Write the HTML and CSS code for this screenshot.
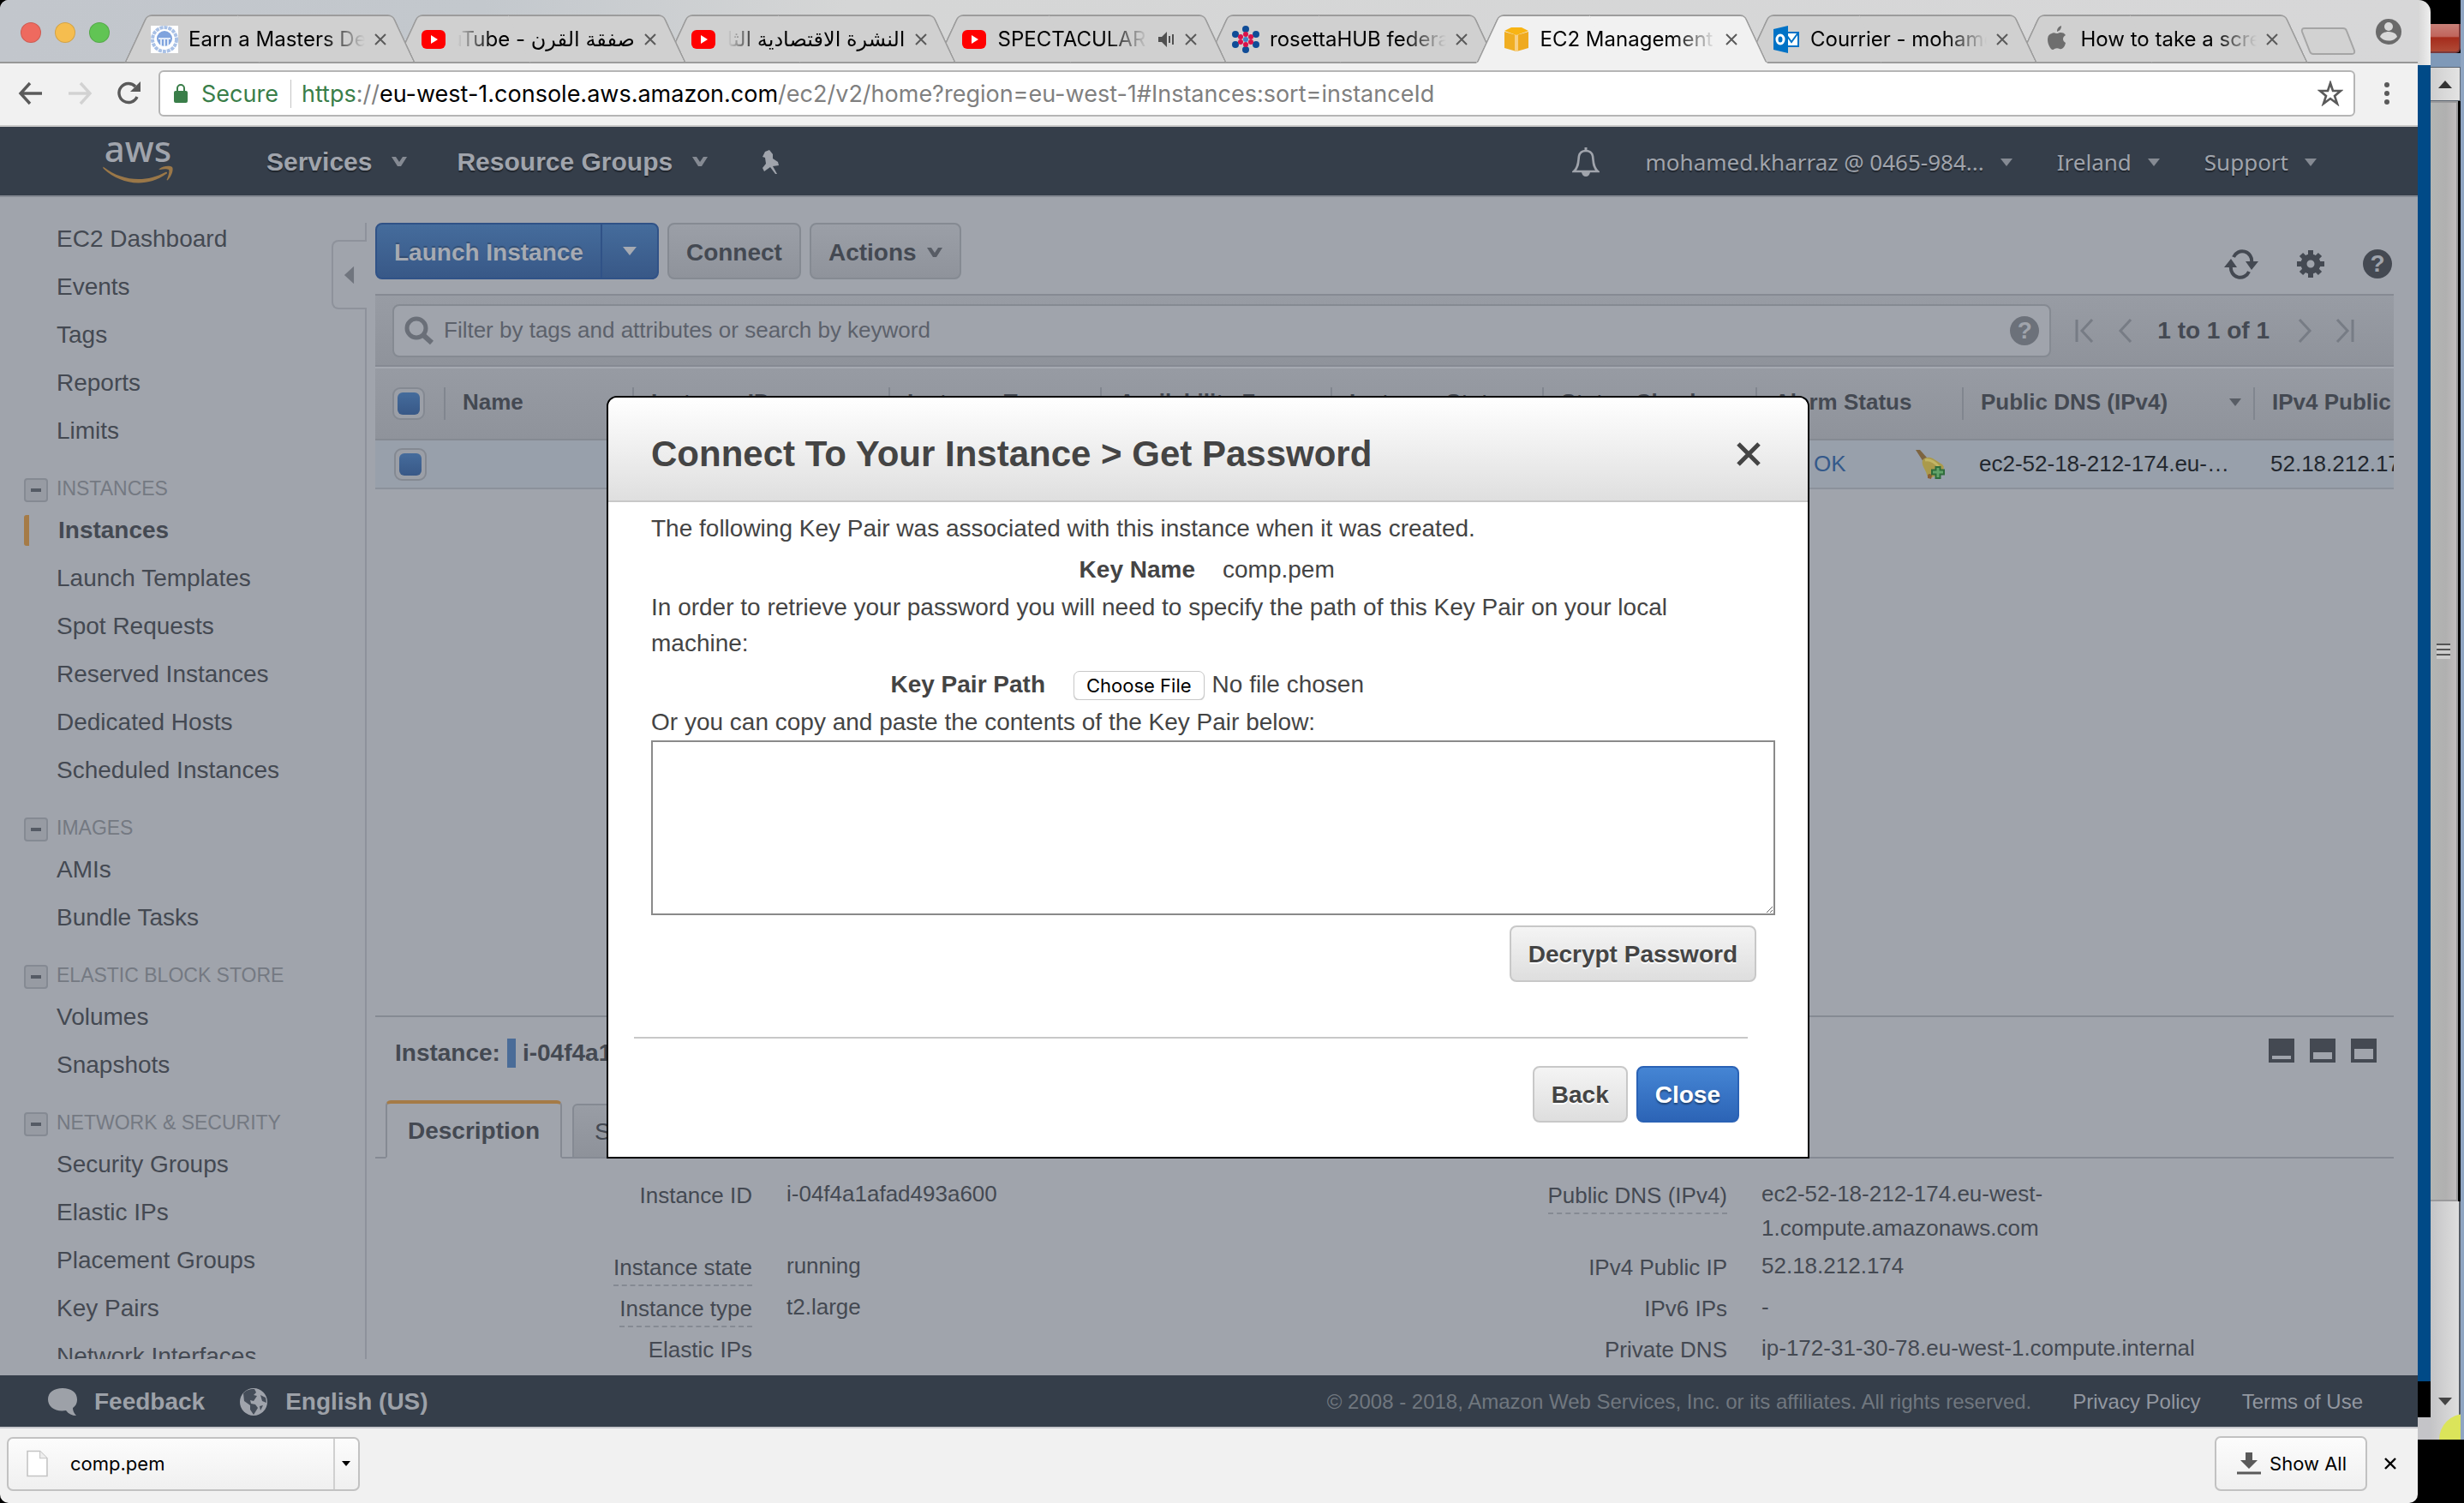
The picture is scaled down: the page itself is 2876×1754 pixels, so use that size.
FILE: index.html
```html
<!DOCTYPE html>
<html lang="en">
<head>
<meta charset="utf-8">
<title>EC2 Management Console</title>
<link rel="stylesheet" href="styles.css">
</head>
<body>
<div class="desktop">
<div class="window">

  <header class="tabstrip">
    <div class="lights"><i class="light red"></i><i class="light amber"></i><i class="light green"></i></div>
    <div class="tabs">
      <div class="tab"><svg class="fav" viewBox="0 0 32 32"><rect width="32" height="32" fill="#fff"/><circle cx="16" cy="16" r="14" fill="none" stroke="#a9c1e6" stroke-width="4" stroke-dasharray="4 1"/><circle cx="16" cy="15" r="9" fill="#7fa3dd"/><path d="M9 15h14M12 15v8M16 15v9M20 15v8" stroke="#dfe9f8" stroke-width="2"/></svg><span class="tab-title">Earn a Masters De</span><button class="x" aria-label="Close tab"><svg viewBox="0 0 16 16"><path d="M2 2l12 12M14 2L2 14"/></svg></button></div>
      <div class="tab"><svg class="fav yt" viewBox="0 0 28 28"><rect y="3" width="28" height="22" rx="6" fill="#f00"/><path d="M11 9l8 5-8 5z" fill="#fff"/></svg><span class="tab-title rtl" dir="rtl">صفقة القرن - YouTube</span><button class="x" aria-label="Close tab"><svg viewBox="0 0 16 16"><path d="M2 2l12 12M14 2L2 14"/></svg></button></div>
      <div class="tab"><svg class="fav yt" viewBox="0 0 28 28"><rect y="3" width="28" height="22" rx="6" fill="#f00"/><path d="M11 9l8 5-8 5z" fill="#fff"/></svg><span class="tab-title rtl" dir="rtl">النشرة الاقتصادية الثان</span><button class="x" aria-label="Close tab"><svg viewBox="0 0 16 16"><path d="M2 2l12 12M14 2L2 14"/></svg></button></div>
      <div class="tab"><svg class="fav yt" viewBox="0 0 28 28"><rect y="3" width="28" height="22" rx="6" fill="#f00"/><path d="M11 9l8 5-8 5z" fill="#fff"/></svg><span class="tab-title">SPECTACULAR</span><svg class="sound" viewBox="0 0 20 18"><path d="M0 6h4l6-6v18l-6-6H0z" fill="#505050"/><path d="M13 5v8M17 3v12" stroke="#505050" stroke-width="2"/></svg><button class="x" aria-label="Close tab"><svg viewBox="0 0 16 16"><path d="M2 2l12 12M14 2L2 14"/></svg></button></div>
      <div class="tab"><svg class="fav" viewBox="0 0 32 32"><g fill="#0f4c97"><circle cx="16" cy="4" r="4"/><circle cx="16" cy="28" r="4"/><circle cx="4" cy="10" r="4"/><circle cx="28" cy="10" r="4"/><circle cx="4" cy="22" r="4"/><circle cx="28" cy="22" r="4"/></g><g fill="#d9124a"><circle cx="16" cy="10" r="3"/><circle cx="16" cy="22" r="3"/><circle cx="10" cy="13" r="3"/><circle cx="22" cy="13" r="3"/><circle cx="10" cy="19" r="3"/><circle cx="22" cy="19" r="3"/></g><circle cx="16" cy="16" r="3" fill="#3e86c8"/></svg><span class="tab-title">rosettaHUB federa</span><button class="x" aria-label="Close tab"><svg viewBox="0 0 16 16"><path d="M2 2l12 12M14 2L2 14"/></svg></button></div>
      <div class="tab active"><svg class="fav" viewBox="0 0 32 32"><path d="M2 7l14 4v19L2 26z" fill="#f0ae22"/><path d="M30 7l-14 4v19l14-4z" fill="#efaa20"/><path d="M2 6l8-4h12l8 4-14 5z" fill="#f8b414"/><path d="M14 11h4v19h-4z" fill="#f7cf83"/></svg><span class="tab-title">EC2 Management</span><button class="x" aria-label="Close tab"><svg viewBox="0 0 16 16"><path d="M2 2l12 12M14 2L2 14"/></svg></button></div>
      <div class="tab"><svg class="fav" viewBox="0 0 32 32"><rect x="15" y="8" width="15" height="16" fill="#fff" stroke="#0072c6" stroke-width="2"/><path d="M17 12l5 7 8-11" fill="none" stroke="#0072c6" stroke-width="2"/><path d="M1 4l17-4v32L1 28z" fill="#0072c6"/><ellipse cx="9" cy="16" rx="4" ry="5" fill="none" stroke="#fff" stroke-width="3"/></svg><span class="tab-title">Courrier - mohame</span><button class="x" aria-label="Close tab"><svg viewBox="0 0 16 16"><path d="M2 2l12 12M14 2L2 14"/></svg></button></div>
      <div class="tab"><svg class="fav" viewBox="0 0 32 32"><path d="M15 9c-2-1-4-1-5 0-6 1-6 9-3 15 2 4 4 5 6 3 2-1 4-1 6 0 3 1 6-2 7-7-4-2-4-7 0-9-3-4-7-3-9-2zM16 7c0-4 2-6 5-7 0 4-2 6-5 7z" fill="#6e6e6e"/></svg><span class="tab-title">How to take a scre</span><button class="x" aria-label="Close tab"><svg viewBox="0 0 16 16"><path d="M2 2l12 12M14 2L2 14"/></svg></button></div>
    </div>
    <button class="newtab" aria-label="New tab"><svg viewBox="0 0 66 34"><path d="M6 2h45q3 0 4 3l9 23q1 4-3 4H16q-3 0-4-3L3 6q-1-4 3-4z" fill="#d2d2d2" stroke="#a5a5a5" stroke-width="2"/></svg></button>
    <svg class="profile" viewBox="0 0 32 32"><circle cx="16" cy="16" r="15" fill="#6a6a6a"/><circle cx="16" cy="10" r="5" fill="#d8d8d8"/><path d="M6 22c2-8 18-8 20 0-5 6-15 6-20 0z" fill="#d8d8d8"/></svg>
  </header>

  <div class="toolbar">
    <button class="tool" aria-label="Back"><svg viewBox="0 0 30 30"><path d="M28 15H3M14 3L3 15l11 12" stroke="#5a5a5a"/></svg></button>
    <button class="tool" aria-label="Forward"><svg viewBox="0 0 30 30"><path d="M2 15h25M16 3l11 12-11 12" stroke="#d2d2d2"/></svg></button>
    <button class="tool" aria-label="Reload"><svg viewBox="0 0 30 30"><path d="M25 19A11 11 0 1 1 23 7" stroke="#5a5a5a"/><path d="M29 1v12H17z" fill="#5a5a5a" stroke="none"/></svg></button>
    <div class="omnibox">
      <svg class="lock" viewBox="0 0 18 24"><rect x="1" y="9" width="16" height="14" rx="2" fill="#3a7e49"/><path d="M5 10V6a4 4 0 0 1 8 0v4" fill="none" stroke="#3a7e49" stroke-width="2"/></svg>
      <span class="secure">Secure</span>
      <span class="url"><span class="scheme">https</span>://<b>eu-west-1.console.aws.amazon.com</b>/ec2/v2/home?region=eu-west-1#Instances:sort=instanceId</span>
      <svg class="star" viewBox="0 0 30 30"><path d="M15 3l3 9h9l-7 6 3 9-8-6-8 6 3-9-7-6h9z" fill="none" stroke="#5a5a5a" stroke-width="2.6"/></svg>
    </div>
    <svg class="dots" viewBox="0 0 8 28"><circle cx="4" cy="4" r="3"/><circle cx="4" cy="14" r="3"/><circle cx="4" cy="24" r="3"/></svg>
  </div>

  <div class="console">
    <nav class="nav">
      <svg class="aws" viewBox="0 0 84 56"><text x="41" y="30" text-anchor="middle" font-family="Noto Sans, sans-serif" font-size="42" font-weight="500" fill="#a0a4ac">aws</text><path d="M1 36c22 17 50 18 72 6 2-1 3 1 1 2C50 61 20 56 1 38c-1-1-1-3 0-2z" fill="#9a7748"/><path d="M66 38c5-4 13-4 15-2 2 3-1 11-5 15-1 1-2 0-1-1 2-5 3-9 2-11-2-1-6-1-10 0-2 0-2-1-1-1z" fill="#9a7748"/></svg>
      <a href="#" class="nav-main">Services <svg class="chev" viewBox="0 0 18 12"><path d="M0 0h5l4 6 4-6h5l-7 11H7z"/></svg></a>
      <a href="#" class="nav-main">Resource Groups <svg class="chev" viewBox="0 0 18 12"><path d="M0 0h5l4 6 4-6h5l-7 11H7z"/></svg></a>
      <svg class="pin" viewBox="0 0 28 28"><path d="M9 2l5-2 4 5 0 5 6 4 1 4-7 1 5 9-2 0-6-8-7 5-2-4 4-5-1-7-3-1z" fill="#a0a4ac"/></svg>
      <span class="push"></span>
      <svg class="bell" viewBox="0 0 32 36"><path d="M2 29c6-5 5-12 6-18 1-4 4-6 8-6s7 2 8 6c1 6 0 13 6 18z" fill="none" stroke="#a0a4ac" stroke-width="2.6"/><path d="M16 1v5" stroke="#a0a4ac" stroke-width="3"/><path d="M11 30h10q-1 5-5 5t-5-5z" fill="#a0a4ac"/></svg>
      <a href="#" class="nav-sub">mohamed.kharraz @ 0465-984... <i class="caret"></i></a>
      <a href="#" class="nav-sub">Ireland <i class="caret"></i></a>
      <a href="#" class="nav-sub">Support <i class="caret"></i></a>
    </nav>

    <div class="body">
      <aside class="sidebar">
        <button class="collapse" aria-label="Collapse"><svg viewBox="0 0 14 24"><path d="M13 1v22L1 12z" fill="#70757e"/></svg></button>
        <div class="side-scroll">
          <a href="#">EC2 Dashboard</a><a href="#">Events</a><a href="#">Tags</a><a href="#">Reports</a><a href="#">Limits</a>
          <h3>INSTANCES</h3>
          <a href="#" class="current">Instances</a><a href="#">Launch Templates</a><a href="#">Spot Requests</a><a href="#">Reserved Instances</a><a href="#">Dedicated Hosts</a><a href="#">Scheduled Instances</a>
          <h3>IMAGES</h3>
          <a href="#">AMIs</a><a href="#">Bundle Tasks</a>
          <h3>ELASTIC BLOCK STORE</h3>
          <a href="#">Volumes</a><a href="#">Snapshots</a>
          <h3>NETWORK &amp; SECURITY</h3>
          <a href="#">Security Groups</a><a href="#">Elastic IPs</a><a href="#">Placement Groups</a><a href="#">Key Pairs</a><a href="#">Network Interfaces</a>
        </div>
      </aside>

      <main class="main">
        <div class="actions">
          <div class="split"><button class="dim-primary">Launch Instance</button><button class="dim-primary drop" aria-label="Launch options"><i class="caret light-caret"></i></button></div>
          <button class="dim-btn">Connect</button>
          <button class="dim-btn">Actions <svg class="chev" viewBox="0 0 18 12"><path d="M0 0h5l4 6 4-6h5l-7 11H7z"/></svg></button>
          <span class="push"></span>
          <div class="icons">
            <svg viewBox="0 0 40 36" class="refresh"><path d="M11 10a11 11 0 0 1 21 6M29 27a11 11 0 0 1-21-6" fill="none" stroke="#444952" stroke-width="4"/><path d="M0 22l8-10 7 10zM25 15h15l-8 10z" fill="#444952"/></svg>
            <svg viewBox="0 0 32 32" class="gear"><circle cx="16" cy="16" r="8" fill="none" stroke="#444952" stroke-width="7"/><path d="M16 0v6M16 26v6M0 16h6M26 16h6M5 5l4 4M23 23l4 4M27 5l-4 4M9 23l-4 4" stroke="#444952" stroke-width="6"/></svg>
            <span class="help">?</span>
          </div>
        </div>

        <div class="filter">
          <div class="search">
            <svg viewBox="0 0 36 36"><circle cx="14" cy="15" r="11" fill="none" stroke="#6a6f78" stroke-width="5"/><path d="M22 23l10 9" stroke="#6a6f78" stroke-width="6"/></svg>
            <input type="text" aria-label="Filter" placeholder="Filter by tags and attributes or search by keyword">
            <span class="help pale">?</span>
          </div>
          <div class="pager">
            <svg viewBox="0 0 22 28"><path d="M2 1v26M20 1L8 14l12 13"/></svg>
            <svg viewBox="0 0 22 28"><path d="M18 1L6 14l12 13"/></svg>
            <b>1 to 1 of 1</b>
            <svg viewBox="0 0 22 28"><path d="M4 1l12 13L4 27"/></svg>
            <svg viewBox="0 0 22 28"><path d="M20 1v26M2 1l12 13L2 27"/></svg>
          </div>
        </div>

        <div class="grid">
          <table>
            <colgroup><col class="c-check"><col class="c-name"><col class="c-id"><col class="c-type"><col class="c-zone"><col class="c-state"><col class="c-checks"><col class="c-alarm"><col class="c-dns"><col></colgroup>
            <thead><tr><th><input type="checkbox" checked aria-label="Select all"></th><th>Name</th><th>Instance ID</th><th>Instance Type</th><th>Availability Zone</th><th>Instance State</th><th>Status Checks</th><th>Alarm Status</th><th><span class="sorted">Public DNS (IPv4) <i class="caret"></i></span></th><th>IPv4 Public IP</th></tr></thead>
            <tbody><tr><td><input type="checkbox" checked aria-label="Select instance"></td><td></td><td></td><td></td><td></td><td></td><td></td><td><span class="alarm"><a href="#">OK</a><svg viewBox="0 0 34 34"><path d="M0 0h5l8 9-4 5z" fill="#7d6440"/><path d="M8 12c3-4 8-4 12-2l11 7c3 3 2 6-2 9l-9 6c-4 1-6 0-7-3-1-6-7-11-5-17z" fill="#aa9a4c"/><path d="M11 12c6-1 12 3 16 8" fill="none" stroke="#c2b566" stroke-width="3"/><path d="M14 30c1-3 4-2 5 0l-1 4-4-1z" fill="#8a5f34"/><path d="M26 19v15M18 26h16" stroke="#2f6c3c" stroke-width="7"/><path d="M26 21v11M20 26h12" stroke="#62a36a" stroke-width="3"/></svg></span></td><td>ec2-52-18-212-174.eu-…</td><td>52.18.212.174</td></tr></tbody>
          </table>
        </div>

        <section class="details">
          <div class="details-head">
            <b>Instance:</b><i class="mark"></i><b>i-04f4a1afad493a600</b>
            <span class="push"></span>
            <div class="panes">
              <svg viewBox="0 0 30 28"><path d="M0 0h30v28H0z"/><path d="M4 20h22v4H4z" fill="#a0a4ac"/></svg>
              <svg viewBox="0 0 30 28"><path d="M0 0h30v28H0z"/><path d="M4 16h22v8H4z" fill="#a0a4ac"/></svg>
              <svg viewBox="0 0 30 28"><path d="M0 0h30v28H0z"/><path d="M4 12h22v12H4z" fill="#a0a4ac"/></svg>
            </div>
          </div>
          <div class="dtabs"><button class="dtab on">Description</button><button class="dtab">Status Checks</button></div>
          <dl class="facts">
            <dt>Instance ID</dt><dd>i-04f4a1afad493a600</dd><dt class="hint">Public DNS (IPv4)</dt><dd>ec2-52-18-212-174.eu-west-<wbr>1.compute.amazonaws.com</dd>
            <dt class="hint">Instance state</dt><dd>running</dd><dt>IPv4 Public IP</dt><dd>52.18.212.174</dd>
            <dt class="hint">Instance type</dt><dd>t2.large</dd><dt>IPv6 IPs</dt><dd>-</dd>
            <dt>Elastic IPs</dt><dd></dd><dt>Private DNS</dt><dd>ip-172-31-30-78.eu-west-1.compute.internal</dd>
          </dl>
        </section>
      </main>
    </div>

    <footer class="footer">
      <svg class="bubble" viewBox="0 0 34 34"><path d="M17 1c10 0 17 5 17 13 0 5-2 8-5 10 0 3 1 6 4 9-5 0-9-2-12-6-12 2-21-4-21-13C0 6 7 1 17 1z" fill="#9da1a8"/></svg>
      <a href="#" class="foot-main">Feedback</a>
      <svg class="globe" viewBox="0 0 34 34"><circle cx="17" cy="17" r="16" fill="#a0a4ac"/><path d="M5 7c5-5 9-5 13-5l2 4-3 3 4 1-4 6-4-1 1 4 5 1 3 4-5 8-4-6 0-5-7-5zM25 9l6 3 1 6-5-2zM24 22l4-1-3 6z" fill="#353e4a" opacity=".85"/></svg>
      <a href="#" class="foot-main">English (US)</a>
      <span class="push"></span>
      <small>© 2008 - 2018, Amazon Web Services, Inc. or its affiliates. All rights reserved.</small>
      <a href="#" class="foot-link">Privacy Policy</a>
      <a href="#" class="foot-link">Terms of Use</a>
    </footer>

    <div class="overlay">
      <div class="dialog" role="dialog" aria-labelledby="dlg-title">
        <header><h2 id="dlg-title">Connect To Your Instance &gt; Get Password</h2><button class="dlg-x" aria-label="Close dialog"><svg viewBox="0 0 28 28"><path d="M2 2l24 24M26 2L2 26" stroke="#444" stroke-width="5"/></svg></button></header>
        <div class="dlg-body">
          <p>The following Key Pair was associated with this instance when it was created.</p>
          <div class="pair name"><b>Key Name</b><span>comp.pem</span></div>
          <p class="wide">In order to retrieve your password you will need to specify the path of this Key Pair on your local machine:</p>
          <div class="pair path"><label for="keyfile">Key Pair Path</label><input type="file" id="keyfile"></div>
          <label class="paste" for="keytext">Or you can copy and paste the contents of the Key Pair below:</label>
          <textarea id="keytext"></textarea>
          <div class="decrypt"><button class="btn">Decrypt Password</button></div>
        </div>
        <div class="dlg-foot"><button class="btn">Back</button><button class="btn primary">Close</button></div>
      </div>
    </div>
  </div>

  <div class="shelf">
    <div class="download"><button class="file"><svg viewBox="0 0 24 30"><path d="M1 1h14l8 8v20H1z" fill="#fff" stroke="#c4c4c4" stroke-width="1.500"/><path d="M15 1v8h8" fill="#eee" stroke="#c4c4c4"/></svg>comp.pem</button><button class="more" aria-label="File options"><i class="caret"></i></button></div>
    <span class="push"></span>
    <button class="showall"><svg viewBox="0 0 28 26"><path d="M10 0h8v9h6L14 19 4 9h6z" fill="#5a5a5a"/><path d="M0 24h28" stroke="#5a5a5a" stroke-width="3"/></svg>Show All</button>
    <button class="x dark" aria-label="Close shelf"><svg viewBox="0 0 16 16"><path d="M2 2l12 12M14 2L2 14"/></svg></button>
  </div>
</div>

<div class="remote">
  <div class="rim"><i class="rim-top"></i><i class="rim-blue"></i><i class="rim-black"></i><i class="rim-grey"></i></div>
  <div class="rscroll">
    <i class="r-black"></i><i class="r-red"></i><i class="r-sky"></i>
    <div class="r-arrow"><i class="tri up"></i></div>
    <div class="r-thumb"><i class="grip"></i></div>
    <div class="r-track"><i class="tri down"></i><i class="spot"></i></div>
  </div>
</div>
</div>
</body>
</html>
```
FILE: styles.css
```css
* { box-sizing: border-box; }
body { margin: 0; font-family: "Liberation Sans", Arial, sans-serif; font-size: 28px; color: #444952; background: #000; }
button { font: inherit; color: inherit; padding: 0; border: 0; background: none; }
a { color: inherit; text-decoration: none; }
svg { display: block; flex: none; }
.push { flex: 1; }

.desktop { display: flex; height: 100vh; overflow: hidden; }
.window { flex: 1; min-width: 0; display: flex; flex-direction: column; background: #f1f1f1; border-radius: 10px 0 10px 10px; overflow: hidden; }

/* Browser tab strip */
.tabstrip { position: relative; display: flex; align-items: center; height: 74px; flex: none; padding-right: 18px; background: linear-gradient(90deg, #c2c6cc, #c3c8cd 20%, #d5d6d6 35%, #d7d7d8); border-bottom: 2px solid #979797; font-family: Inter, "DejaVu Sans", sans-serif; font-size: 24px; color: #000; }
.lights { display: flex; gap: 16px; padding: 4px 5px 0 24px; }
.light { width: 24px; height: 24px; border-radius: 50%; border: 1px solid #0002; }
.red { background: #ee6a5f; }
.amber { background: #f5bd4f; }
.green { background: #61c454; }
.tabs { flex: 1; min-width: 0; display: flex; align-self: stretch; padding: 17px 0 0 12px; }
.tab { position: relative; flex: 1 1 0; min-width: 0; height: 57px; display: flex; align-items: center; padding: 0 34px 0 31px; margin-right: -25px; z-index: 1; }
.tab::before, .tab::after { content: ""; position: absolute; z-index: -1; top: 0; bottom: 0; width: 53%; background: #d0d0d0; border: 2px solid #9c9c9c; }
.tab::before { left: 13px; border-right: 0; border-top-left-radius: 6px; transform: skewX(-25deg); }
.tab::after { right: 13px; border-left: 0; border-top-right-radius: 6px; transform: skewX(25deg); }
.tab:nth-child(1) { z-index: 8; }
.tab:nth-child(2) { z-index: 7; }
.tab:nth-child(3) { z-index: 6; }
.tab:nth-child(4) { z-index: 5; }
.tab:nth-child(5) { z-index: 4; }
.tab:nth-child(7) { z-index: 3; }
.tab:nth-child(8) { z-index: 2; }
.tab.active { z-index: 9; }
.tab.active::before, .tab.active::after { background: #f1f1f1; border-bottom-color: #f1f1f1; }
.fav { width: 32px; height: 32px; margin-right: 12px; }
.fav.yt { width: 28px; height: 28px; margin-right: 14px; }
.tab-title { flex: 1; min-width: 0; overflow: hidden; white-space: nowrap; line-height: 36px; -webkit-mask-image: linear-gradient(270deg, transparent, #000 50px); mask-image: linear-gradient(270deg, transparent, #000 50px); }
.tab-title.rtl { -webkit-mask-image: linear-gradient(90deg, transparent, #000 40px); mask-image: linear-gradient(90deg, transparent, #000 40px); }
.sound { width: 20px; height: 18px; margin-left: 12px; }
.x { width: 16px; height: 16px; margin-left: 10px; flex: none; }
.x path { stroke: #5a5a5a; stroke-width: 2; }
.x.dark path { stroke: #000; stroke-width: 2.4; }
.newtab { width: 66px; height: 34px; margin: 24px 22px 0 15px; flex: none; }
.profile { width: 32px; height: 32px; margin-top: 2px; }

/* Address bar */
.toolbar { display: flex; align-items: center; height: 74px; flex: none; padding: 0 32px 2px 21px; border-bottom: 2px solid #c9c9c9; font-family: Inter, sans-serif; font-size: 27px; }
.tool { width: 30px; height: 30px; margin-right: 27px; }
.tool path { fill: none; stroke-width: 3.4; }
.tool:nth-child(3) path:last-child { fill: #5a5a5a; }
.tool:nth-child(3) { margin-right: 20px; }
.omnibox { flex: 1; display: flex; align-items: center; height: 54px; padding: 0 12px 0 15px; background: #fff; border: 2px solid #b5b5b5; border-radius: 6px; }
.lock { width: 18px; height: 24px; }
.secure { color: #3a7e49; margin-left: 15px; padding-right: 14px; margin-right: 12px; border-right: 1px solid #c4c4c4; }
.url { flex: 1; color: #808080; white-space: nowrap; }
.url b { font-weight: 400; color: #000; }
.scheme { color: #3a7e49; }
.star { width: 30px; height: 30px; }
.dots { width: 8px; height: 28px; margin-left: 33px; fill: #5a5a5a; }

/* Console */
.console { position: relative; flex: 1; min-height: 0; display: flex; flex-direction: column; background: #a0a4ac; }
.nav { display: flex; align-items: center; flex: none; height: 82px; padding: 2px 118px 0 120px; background: #353e4a; border-bottom: 2px solid #858a93; color: #a0a4ac; }
.aws { width: 84px; height: 56px; margin: 0 107px 4px 0; }
.nav-main { display: flex; align-items: center; gap: 23px; font-size: 30px; font-weight: 700; margin-right: 58px; text-shadow: 0 2px 1px #0006; }
.chev { width: 18px; height: 12px; fill: currentColor; opacity: .75; }
.pin { width: 28px; height: 28px; }
.bell { width: 32px; height: 36px; margin-right: 54px; }
.nav-sub { display: flex; align-items: center; gap: 19px; margin-left: 52px; font-family: "Noto Sans", sans-serif; font-size: 26px; text-shadow: 0 2px 1px #0006; }
.bell + .nav-sub { margin-left: 0; }
.caret { width: 0; height: 0; border: 7px solid transparent; border-top: 9px solid; border-bottom: 0; opacity: .75; }
.body { flex: 1; min-height: 0; display: flex; }

.sidebar { position: relative; flex: none; width: 428px; margin: 30px 0 19px; border-right: 2px solid #8e929b; }
.side-scroll { height: 100%; padding-top: 1px; overflow: hidden; }
.sidebar a { position: relative; display: block; height: 56px; line-height: 36px; padding-left: 66px; }
.sidebar .current { font-weight: 700; padding-left: 68px; }
.current::before { content: ""; position: absolute; left: 28px; top: 0; width: 6px; height: 36px; border-radius: 3px 0 0 3px; background: #a57b47; }
.sidebar h3 { position: relative; height: 60px; margin: 0; padding: 11px 0 12px 66px; font-size: 23px; font-weight: 400; line-height: 36px; color: #747982; }
.sidebar h3::before { content: ""; position: absolute; left: 28px; top: 17px; width: 24px; height: 24px; border: 2px solid #858a93; border-radius: 4px; background: linear-gradient(#555b65, #555b65) center / 12px 4px no-repeat #979ba3; }
.collapse { position: absolute; z-index: 1; right: -2px; top: 20px; width: 41px; height: 81px; padding: 0 12px; border: 2px solid #8e929b; border-right: 0; border-radius: 8px 0 0 8px; background: #a0a4ac; }
.collapse svg { width: 13px; height: 24px; }

.main { flex: 1; min-width: 0; display: flex; flex-direction: column; padding: 30px 28px 0 10px; }
.actions { display: flex; align-items: center; gap: 10px; height: 66px; margin-bottom: 17px; font-weight: 700; flex: none; }
.split { display: flex; }
.dim-primary, .dim-btn { height: 66px; padding: 3px 20px 0; border-radius: 8px; }
.dim-primary { color: #a6aab2; background: linear-gradient(#456c9c, #385887); border: 2px solid #305287; text-shadow: 0 -2px 1px #0003; border-radius: 8px 0 0 8px; }
.dim-primary.drop { border-radius: 0 8px 8px 0; margin-left: -2px; padding: 0 24px; }
.light-caret { display: block; border-width: 10px 8px 0; border-top-color: #a6aab2; opacity: 1; }
.dim-btn { display: flex; align-items: center; gap: 12px; background: linear-gradient(#9b9fa7, #8f939b); border: 2px solid #858a92; }
.icons { display: flex; align-items: center; align-self: flex-end; padding-right: 2px; }
.refresh { width: 40px; height: 36px; }
.gear { width: 32px; height: 32px; margin: 0 45px; }
.help { flex: none; width: 34px; height: 34px; border-radius: 50%; background: #444952; color: #a0a4ac; font-weight: 700; line-height: 34px; text-align: center; }
.help.pale { background: #6c717a; }

.filter { display: flex; align-items: center; flex: none; height: 85px; padding: 0 46px 0 20px; border: solid #868a93; border-width: 2px 0; background: linear-gradient(#989ca4, #8f939b); }
.search { flex: 1; display: flex; align-items: center; height: 62px; padding: 0 12px; background: #a0a4ac; border: 2px solid #858a92; border-radius: 8px; }
.search svg { width: 36px; height: 36px; }
.search input { flex: 1; min-width: 0; margin: 0 10px; padding: 0; border: 0; background: none; font: inherit; font-size: 26px; color: #444952; }
.search input::placeholder { color: #5c616b; opacity: 1; }
.pager { display: flex; align-items: center; margin-left: 28px; }
.pager svg { width: 22px; height: 28px; }
.pager path { fill: none; stroke: #777c85; stroke-width: 3; }
.pager svg:nth-child(2) { margin-left: 25px; }
.pager b { margin: 0 31px 0 27px; }
.pager svg:nth-child(5) { margin-left: 24px; }

.grid { flex: 1; min-height: 0; overflow: hidden; }
table { width: 100%; table-layout: fixed; border-collapse: separate; border-spacing: 0; font-size: 26px; }
.c-check { width: 80px; }
.c-name { width: 220px; }
.c-id { width: 299px; }
.c-type, .c-state { width: 247px; }
.c-zone { width: 269px; }
.c-checks { width: 249px; }
.c-alarm { width: 241px; }
.c-dns { width: 340px; }
th, td { padding: 0 0 0 22px; text-align: left; white-space: nowrap; overflow: hidden; }
th { height: 86px; padding-bottom: 3px; border-top: 2px solid #a5a9b1; border-bottom: 2px solid #858a92; background: linear-gradient(#81868f, #81868f) left center / 2px 38px no-repeat, linear-gradient(#979ba3, #8f939b); }
th:first-child { padding: 0 0 0 20px; background: linear-gradient(#979ba3, #8f939b); }
td { height: 57px; background: #98a0ab; border-bottom: 2px solid #8b919b; color: #22272e; padding-left: 20px; }
td:first-child { padding-left: 22px; }
td a { color: #34598a; }
input[type="checkbox"] { appearance: none; display: block; width: 38px; height: 38px; margin: 0; border: 2px solid #848992; border-radius: 9px; background: #9b9fa7; padding: 4px; }
input[type="checkbox"]::before { content: ""; display: block; width: 26px; height: 26px; border-radius: 6px; background: linear-gradient(#456c9c, #385887); }
.sorted, .alarm { display: flex; align-items: center; justify-content: space-between; padding-right: 14px; }
.alarm { padding: 0 20px 0 48px; }
.alarm svg { width: 34px; height: 34px; }

.details { flex: none; height: 420px; overflow: hidden; border-top: 2px solid #858a93; }
.details-head { display: flex; align-items: center; height: 84px; padding: 0 20px 0 23px; }
.mark { width: 10px; height: 34px; margin: 0 8px; background: #4a6c98; }
.panes { display: flex; gap: 18px; margin-bottom: 6px; }
.panes svg { width: 30px; height: 28px; fill: #444952; }
.dtabs { display: flex; align-items: flex-end; gap: 12px; height: 68px; margin-top: 13px; padding-left: 12px; border-bottom: 2px solid #858a93; }
.dtab { height: 64px; margin-bottom: -2px; padding: 2px 24px 0; border: 2px solid #858a93; border-radius: 6px 6px 0 0; background: linear-gradient(#999da5, #8e929a); }
.dtab.on { height: 68px; font-weight: 700; background: #a0a4ac; border-bottom-color: #a0a4ac; border-top: 4px solid #a57b47; }
.facts { display: grid; grid-template-columns: 440px 1fr 360px 1fr; row-gap: 4px; margin: 21px 0 0; font-size: 26px; line-height: 40px; }
.facts dt { justify-self: end; align-self: start; padding-top: 2px; border-bottom: 2px dashed transparent; }
.facts dt.hint { border-bottom-color: #858a93; }
.facts dd { margin: 0; padding-left: 40px; max-width: 600px; }

.footer { display: flex; align-items: center; flex: none; height: 60px; padding: 1px 64px 0 56px; background: #353e4a; color: #9da1a8; }
.bubble, .globe { width: 34px; height: 34px; margin-right: 20px; }
.foot-main { font-weight: 700; margin-right: 40px; }
.footer small { font-size: 24px; color: #70777f; }
.foot-link { margin-left: 48px; font-size: 24px; color: #9297a0; }

/* Dialog */
.overlay { position: absolute; inset: 0; display: grid; place-items: center; padding-right: 2px; }
.dialog { width: 1404px; max-width: 90%; background: #fff; border: 2px solid #000; border-radius: 12px 12px 0 0; color: #444; overflow: hidden; }
.dialog header { display: flex; align-items: center; justify-content: space-between; height: 122px; padding: 12px 55px 0 50px; background: linear-gradient(#fff, #dfdfdf); border-bottom: 2px solid #c8c8c8; }
.dialog h2 { margin: 0; font-size: 42px; line-height: 48px; }
.dlg-x { width: 28px; height: 28px; }
.dlg-body { padding: 10px 38px 0 50px; line-height: 42px; }
.dlg-body p { margin: 0; }
.wide { padding-right: 60px; }
.pair { display: flex; height: 50px; align-items: center; padding-top: 5px; }
.name b { width: 635px; text-align: right; margin-right: 32px; }
.path label { font-weight: 700; width: 460px; text-align: right; margin-right: 33px; }
input[type="file"] { font: inherit; color: inherit; width: 460px; line-height: 34px; }
input[type="file"]::file-selector-button { height: 34px; padding: 0 14px; margin-right: 9px; border: 1px solid #c8c8c8; border-radius: 7px; background: #fff; box-shadow: 0 1px 1px #0003; color: #000; font-family: Inter, sans-serif; font-size: 22px; }
.paste { display: block; }
textarea { display: block; width: 100%; height: 204px; margin: 0; border: 2px solid #8a8a8a; background: #fff; font: inherit; }
.decrypt { display: flex; justify-content: flex-end; padding: 12px 22px 0 0; }
.btn { height: 66px; padding: 2px 20px 0; border: 2px solid #c8c8c8; border-radius: 8px; background: linear-gradient(#f4f4f4, #dedede); font-weight: 700; text-shadow: 0 2px 0 #fff; }
.btn.primary { color: #fff; border-color: #2a62b5; background: linear-gradient(#4585d4, #2c64b6); text-shadow: 0 2px 2px #0006; }
.dlg-foot { display: flex; justify-content: flex-end; gap: 10px; margin: 64px 70px 0 30px; padding: 32px 10px 40px 0; border-top: 2px solid #c8c8c8; }

/* Download shelf */
.shelf { display: flex; align-items: center; flex: none; height: 89px; padding: 0 24px 5px 8px; border-top: 2px solid #c9c9ce; font-family: Inter, sans-serif; font-size: 22px; color: #000; }
.download { display: flex; width: 412px; height: 63px; border: 2px solid #c2c2c2; border-radius: 7px; background: linear-gradient(#fcfcfc, #f0f0f0); }
.file { flex: 1; display: flex; align-items: center; gap: 26px; padding-left: 21px; }
.file svg { width: 25px; height: 32px; }
.more { width: 29px; border-left: 2px solid #d0d0d0; padding-left: 8px; }
.more .caret { display: block; border-width: 6px 5px 0; opacity: 1; }
.showall { display: flex; align-items: center; gap: 10px; height: 64px; padding: 0 22px 0 24px; border: 2px solid #c2c2c2; border-radius: 7px; background: linear-gradient(#fcfcfc, #f0f0f0); }
.showall svg { width: 28px; height: 26px; }
.shelf .x { margin-left: 19px; }

/* Strip of the desktop behind the window */
.remote { display: flex; flex: none; width: 54px; padding-bottom: 74px; }
.rim { display: flex; flex-direction: column; width: 15px; }
.rim-top { height: 76px; background: linear-gradient(90deg, #d6d6d6, #eee); border-top-right-radius: 14px; }
.rim-blue { flex: 1; background: #004a87; }
.rim-black { height: 42px; background: #000; }
.rim-grey { height: 26px; background: #c4c4c8; }
.rscroll { flex: 1; display: flex; flex-direction: column; border-right: 4px solid #8fa5c2; overflow: hidden; }
.r-black { height: 28px; margin-right: -4px; background: #000; }
.r-red { height: 34px; background: linear-gradient(#c88078, #c0655c 45%, #a52c1c 50%, #b04a36); border: 2px solid #7a3a3c; border-width: 0 2px 2px 0; border-radius: 0 0 6px 0; }
.r-sky { height: 16px; background: #7f99b8; }
.r-arrow { display: grid; place-items: center; height: 40px; border: 1px solid #5b6470; border-left: 0; background: linear-gradient(90deg, #cfcfcf, #e3e3e3); }
.tri { width: 0; height: 0; border: 8px solid transparent; }
.tri.up { border-top: 0; border-bottom: 9px solid #333; }
.tri.down { border-bottom: 0; border-top: 9px solid #444; }
.r-thumb { flex: 1; display: grid; place-items: center; margin-right: 3px; border: 2px solid #9a9a9c; border-left: 0; background: linear-gradient(90deg, #b3b5b3, #b0b0b0 60%, #c0bcbe); }
.grip { width: 16px; height: 18px; background: repeating-linear-gradient(#555 0 2px, #ccc 2px 6px); }
.r-track { position: relative; height: 278px; background: linear-gradient(90deg, #c4c4c6, #dedede); border-right: 2px solid #555c66; display: flex; justify-content: center; align-items: flex-end; padding-bottom: 40px; }
.spot { position: absolute; left: 10px; bottom: -30px; width: 60px; height: 60px; border-radius: 50%; background: #dbe45a; }
```
